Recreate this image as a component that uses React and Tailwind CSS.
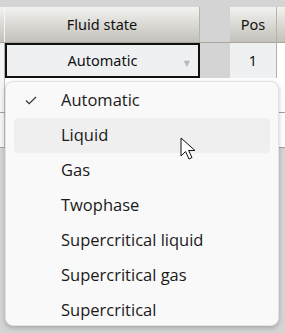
const items = [
  "Automatic",
  "Liquid",
  "Gas",
  "Twophase",
  "Supercritical liquid",
  "Supercritical gas",
  "Supercritical",
];

const HeaderCell = ({ className, children }) => (
  <div
    className={`flex items-center justify-center bg-gradient-to-b from-[#f2f2f0] to-[#c3c1ba] border-r border-[#b5b3ac] ${className}`}
  >
    {children}
  </div>
);

export default function App() {
  return (
    <div
      className="relative w-[285px] h-[333px] bg-[#d4d4d4] overflow-hidden text-[#111]"
      style={{ fontFamily: "'Noto Sans', 'DejaVu Sans', sans-serif" }}
    >
      <div className="h-[7px]" />

      {/* header row */}
      <div className="flex h-[36px] text-[14.5px] border-b border-[#a8a69f]">
        <HeaderCell className="w-[5px] border-r-[#f5f5f5]" />
        <HeaderCell className="w-[195px]">Fluid state</HeaderCell>
        <div className="w-[30px] bg-[#d4d4d4]" />
        <HeaderCell className="w-[47px]">Pos</HeaderCell>
        <HeaderCell className="flex-1 border-r-0" />
      </div>

      {/* selected row */}
      <div className="flex h-[35px] text-[14.5px]">
        <div className="w-[5px] bg-[#f4f4f4] border-r border-[#b0b0b0]" />
        <div className="w-[195px] flex items-center justify-center relative bg-[#eef0f2] border-2 border-[#111]">
          Automatic
          <span className="absolute right-[8px] top-[12px] text-[8px] text-[#b8b8b8]">▼</span>
        </div>
        <div className="w-[30px] bg-[#d4d4d4]" />
        <div className="w-[47px] flex items-center justify-center bg-[#eef0f2] border-r border-[#b0b0b0]">
          1
        </div>
        <div className="flex-1 bg-white" />
      </div>

      {/* empty rows */}
      <div className="flex h-[35px] bg-white border-b border-[#a0a0a0]">
        <div className="w-[5px] bg-[#f4f4f4] border-r border-[#c0c0c0]" />
      </div>
      <div className="flex h-[35px] bg-white border-b border-[#a0a0a0]">
        <div className="w-[5px] bg-[#f4f4f4] border-r border-[#c0c0c0]" />
      </div>

      {/* dropdown menu */}
      <div className="absolute left-[5px] top-[81px] w-[274px] h-[245px] bg-[#f9f9f9] rounded-[8px] border border-[#e2e2e2] shadow-[0_2px_5px_rgba(0,0,0,0.22)] px-[8px] py-[1px]">
        {items.map((it, i) => (
          <div
            key={it}
            className={`relative flex items-center h-[35px] rounded-[4px] pl-[47px] text-[16.5px] text-[#1a1a1a] ${
              i === 1 ? "bg-[#efefef]" : ""
            }`}
            style={{ fontFamily: "'Open Sans', 'Noto Sans', sans-serif" }}
          >
            {i === 0 && (
              <svg
                className="absolute left-[11px] top-[13px]"
                width="12"
                height="9"
                viewBox="0 0 12 9"
              >
                <path d="M1 4.5 L4.2 7.7 L11 1" fill="none" stroke="#333" strokeWidth="1.2" />
              </svg>
            )}
            {it}
          </div>
        ))}
      </div>

      {/* cursor */}
      <svg
        className="absolute left-[180px] top-[137px]"
        width="20"
        height="28"
        viewBox="0 0 20 28"
      >
        <path
          d="M1 1 L1 19 L5.5 14.5 L9 22 L12 20.5 L8.6 13.5 L15 13.5 Z"
          fill="#fff"
          stroke="#111"
          strokeWidth="1"
          strokeLinejoin="miter"
        />
      </svg>
    </div>
  );
}
